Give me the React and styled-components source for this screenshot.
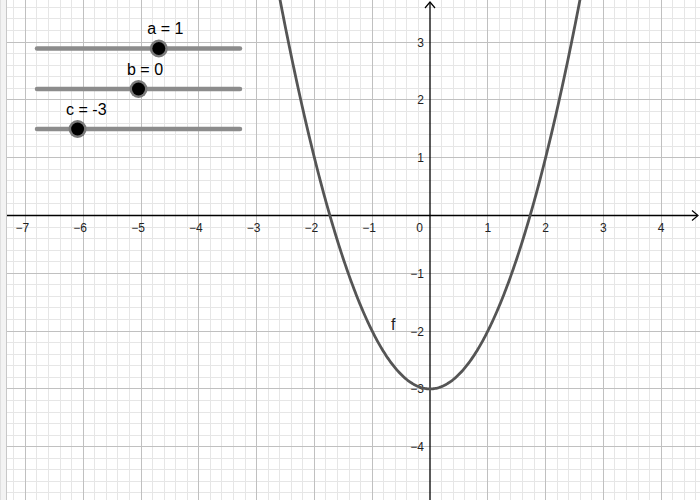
import styled, { createGlobalStyle } from 'styled-components';

const Global = createGlobalStyle`
  html, body {
    margin: 0;
    padding: 0;
    background: #ffffff;
    font-family: "Liberation Sans", Arial, sans-serif;
  }
`;

const W = 700;
const H = 500;
const OX = 430;
const OY = 215.5;
const U = 57.8;

const toX = (x) => OX + x * U;
const toY = (y) => OY - y * U;

const sliders = [
  { name: 'a', value: 1, y: 48.5 },
  { name: 'b', value: 0, y: 89 },
  { name: 'c', value: -3, y: 129 },
];
const SL_X0 = 37;
const SL_X1 = 240;

function range(a, b) {
  const out = [];
  for (let i = a; i <= b; i++) out.push(i);
  return out;
}

function Grid() {
  const minX = Math.floor(((0 - OX) / U) * 5);
  const maxX = Math.ceil(((W - OX) / U) * 5);
  const minY = Math.floor(((OY - H) / U) * 5);
  const maxY = Math.ceil((OY / U) * 5);
  return (
    <g shapeRendering="crispEdges">
      {range(minX, maxX).filter((i) => i % 5 !== 0).map((i) => (
        <MinorLine key={'vx' + i} x1={toX(i / 5)} x2={toX(i / 5)} y1={0} y2={H} />
      ))}
      {range(minY, maxY).filter((i) => i % 5 !== 0).map((i) => (
        <MinorLine key={'hy' + i} x1={0} x2={W} y1={toY(i / 5)} y2={toY(i / 5)} />
      ))}
      {range(-8, 5).filter((i) => i !== 0).map((i) => (
        <MajorLine key={'VX' + i} x1={toX(i)} x2={toX(i)} y1={0} y2={H} />
      ))}
      {range(-5, 4).filter((i) => i !== 0).map((i) => (
        <MajorLine key={'HY' + i} x1={0} x2={W} y1={toY(i)} y2={toY(i)} />
      ))}
    </g>
  );
}

function Axes() {
  const xs = range(-7, 4).filter((i) => i !== 0);
  const ys = range(-4, 3).filter((i) => i !== 0);
  const label = (n) => (n < 0 ? '\u2212' + Math.abs(n) : String(n));
  return (
    <g>
      <AxisLine x1={0} x2={697} y1={OY} y2={OY} />
      <AxisLine x1={OX} x2={OX} y1={H} y2={2} />
      <AxisArrow d={`M ${692} ${OY - 5} L ${698} ${OY} L ${692} ${OY + 5}`} />
      <AxisArrow d={`M ${OX - 5} ${8} L ${OX} ${2} L ${OX + 5} ${8}`} />
      {xs.map((i) => (
        <TickLabel key={'lx' + i} x={toX(i) - (i < 0 ? 3 : 0)} y={OY + 16} textAnchor="middle">
          {label(i)}
        </TickLabel>
      ))}
      {ys.map((i) => (
        <TickLabel key={'ly' + i} x={OX - 6} y={toY(i) + 4.5} textAnchor="end">
          {label(i)}
        </TickLabel>
      ))}
      <TickLabel x={OX - 7} y={OY + 16} textAnchor="end">0</TickLabel>
    </g>
  );
}

function Curve() {
  const pts = [];
  for (let px = 250; px <= 620; px += 1) {
    const x = (px - OX) / U;
    const y = x * x - 3;
    pts.push(`${px},${toY(y).toFixed(2)}`);
  }
  return (
    <g>
      <CurvePath points={pts.join(' ')} />
      <FunctionLabel x={391} y={330}>f</FunctionLabel>
    </g>
  );
}

function Slider({ name, value, y }) {
  const kx = SL_X0 + ((value + 5) / 10) * (SL_X1 - SL_X0);
  return (
    <g>
      <SliderTrack x1={SL_X0} x2={SL_X1} y1={y} y2={y} />
      <KnobHalo cx={kx} cy={y} r={9} />
      <Knob cx={kx} cy={y} r={6.5} />
      <SliderLabel x={kx - 11.5} y={y - 14.5}>
        {name} = {value}
      </SliderLabel>
    </g>
  );
}

export default function App() {
  return (
    <>
      <Global />
      <Frame>
        <SideStrip />
        <Canvas>
          <svg width={W - 7} height={H} viewBox={`7 0 ${W - 7} ${H}`}>
            <rect x={0} y={0} width={W} height={H} fill="#ffffff" />
            <Grid />
            <Axes />
            <Curve />
            {sliders.map((s) => (
              <Slider key={s.name} {...s} />
            ))}
          </svg>
        </Canvas>
      </Frame>
    </>
  );
}

const Frame = styled.div`
  display: flex;
  width: ${W}px;
  height: ${H}px;
  overflow: hidden;
  background: #ffffff;
`;

const SideStrip = styled.div`
  width: 6px;
  height: 100%;
  background: #f3f3f3;
  border-left: 1px solid #e0e0e0;
  border-right: 1px solid #c8c8c8;
  box-sizing: border-box;
  flex: 0 0 7px;
`;

const Canvas = styled.div`
  flex: 1;
  height: 100%;
  svg {
    display: block;
  }
`;

const MinorLine = styled.line`
  stroke: #e6e6e6;
  stroke-width: 1;
`;

const MajorLine = styled.line`
  stroke: #c0c0c0;
  stroke-width: 1;
`;

const AxisLine = styled.line`
  stroke: #000000;
  stroke-width: 1.3;
`;

const AxisArrow = styled.path`
  fill: none;
  stroke: #000000;
  stroke-width: 1.2;
`;

const TickLabel = styled.text`
  font-family: "Liberation Sans", Arial, sans-serif;
  font-size: 12px;
  fill: #222222;
`;

const CurvePath = styled.polyline`
  fill: none;
  stroke: #555555;
  stroke-width: 2.8;
  stroke-linejoin: round;
`;

const FunctionLabel = styled.text`
  font-family: "Liberation Sans", Arial, sans-serif;
  font-size: 16px;
  fill: #222222;
`;

const SliderTrack = styled.line`
  stroke: #8c8c8c;
  stroke-width: 4.5;
  stroke-linecap: round;
`;

const KnobHalo = styled.circle`
  fill: #7a7a7a;
`;

const Knob = styled.circle`
  fill: #000000;
`;

const SliderLabel = styled.text`
  font-family: "Liberation Sans", Arial, sans-serif;
  font-size: 16px;
  fill: #000000;
`;
